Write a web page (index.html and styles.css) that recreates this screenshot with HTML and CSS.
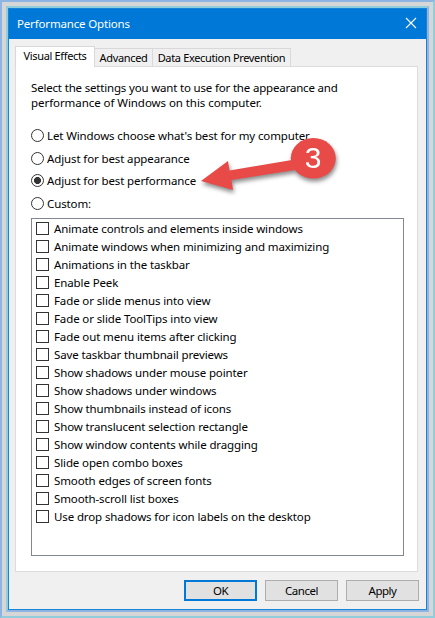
FILE: index.html
```
<!doctype html>
<html>
<head>
    <meta charset="utf-8">
    <title>Performance Options</title>
    <link rel="stylesheet" href="styles.css">
</head>
<body>

<div class="frame">
<div class="frame-inner">
<div class="window">
    <div class="titlebar">
        <span class="title">Performance Options</span>
        <svg class="close" width="12" height="12" viewBox="0 0 12 12">
            <path d="M1 1L11 11M11 1L1 11" stroke="#fff" stroke-width="1.1" fill="none"/>
        </svg>
    </div>

    <div class="tabs">
        <div class="tab active">Visual Effects</div>
        <div class="tab tab-adv">Advanced</div>
        <div class="tab tab-dep">Data Execution Prevention</div>
    </div>

    <div class="panel">
        <div class="intro">
            <div class="intro-a">Select the settings you want to use for the appearance and</div>
            <div class="intro-b">performance of Windows on this computer.</div>
        </div>

        <div class="radios">
            <div class="radio"><i></i><span>Let Windows choose what's best for my computer</span></div>
            <div class="radio"><i></i><span>Adjust for best appearance</span></div>
            <div class="radio checked"><i></i><span>Adjust for best performance</span></div>
            <div class="radio"><i></i><span>Custom:</span></div>
        </div>

        <div class="list">
            <div class="item"><i></i><span>Animate controls and elements inside windows</span></div>
            <div class="item"><i></i><span>Animate windows when minimizing and maximizing</span></div>
            <div class="item"><i></i><span>Animations in the taskbar</span></div>
            <div class="item"><i></i><span>Enable Peek</span></div>
            <div class="item"><i></i><span>Fade or slide menus into view</span></div>
            <div class="item"><i></i><span>Fade or slide ToolTips into view</span></div>
            <div class="item"><i></i><span>Fade out menu items after clicking</span></div>
            <div class="item"><i></i><span>Save taskbar thumbnail previews</span></div>
            <div class="item"><i></i><span>Show shadows under mouse pointer</span></div>
            <div class="item"><i></i><span>Show shadows under windows</span></div>
            <div class="item"><i></i><span>Show thumbnails instead of icons</span></div>
            <div class="item"><i></i><span>Show translucent selection rectangle</span></div>
            <div class="item"><i></i><span>Show window contents while dragging</span></div>
            <div class="item"><i></i><span>Slide open combo boxes</span></div>
            <div class="item"><i></i><span>Smooth edges of screen fonts</span></div>
            <div class="item"><i></i><span>Smooth-scroll list boxes</span></div>
            <div class="item"><i></i><span>Use drop shadows for icon labels on the desktop</span></div>
        </div>
    </div>

    <div class="buttons">
        <div class="btn default">OK</div>
        <div class="btn">Cancel</div>
        <div class="btn">Apply</div>
    </div>
</div>
</div>
</div>

<svg class="callout" width="160" height="80" viewBox="190 125 160 80">
    <path d="M201 181L228 161L229.500 170.500L292 160L295 170L231.500 180L233 190Z" fill="#e84b47"/>
    <ellipse cx="313.300" cy="158.300" rx="22.500" ry="20.300" fill="#e84b47"/>
    <text x="313" y="167.500" text-anchor="middle" class="num">3</text>
</svg>

</body>
</html>
```

FILE: styles.css
```
* {
    box-sizing: border-box;
}

body {
    margin: 0;
    font: 11.5px/15px "Noto Sans", "Open Sans", sans-serif;
    letter-spacing: -.12px;
    color: #000;
}

.frame {
    width: 435px;
    height: 618px;
    padding: 4px;
    background: #d6d6d6;
    border: 2px solid;
    border-color: #8eb4e3 #92cddc #92cddc #8eb4e3;
}

.frame-inner {
    height: 606px;
    border: 2px solid;
    border-color: #92cddc #8eb4e3 #8eb4e3 #92cddc;
}

.window {
    height: 602px;
    border: 1px solid #1883d7;
    background: #f0f0f0;
}

.titlebar {
    display: flex;
    justify-content: space-between;
    height: 30px;
    padding: 7px 9px 0 8px;
    background: #0078d7;
    color: #fff;
}

.title {
    letter-spacing: -.16px;
}

.close {
    margin-top: 1px;
}

.tabs {
    display: flex;
    align-items: flex-end;
    height: 27px;
    padding-left: 6px;
    white-space: nowrap;
}

.tab {
    height: 18px;
    padding-top: 1px;
    border: 1px solid #d9d9d9;
    border-left: none;
    border-bottom: none;
    background: #f0f0f0;
    text-align: center;
    font-size: 11px;
    letter-spacing: -.34px;
}

.tab.active {
    position: relative;
    width: 80px;
    height: 21px;
    margin-bottom: -1px;
    border-left: 1px solid #d9d9d9;
    background: #fff;
}

.tab-adv {
    width: 58px;
}

.tab-dep {
    width: 138px;
}

.panel {
    width: 403px;
    height: 506px;
    margin-left: 6px;
    padding: 13px 13px 0 15px;
    border: 1px solid #dcdcdc;
    background: #fff;
    white-space: nowrap;
}

.intro-a {
    letter-spacing: -.18px;
}

.intro-b {
    letter-spacing: -.06px;
}

.radios {
    padding-top: 14px;
}

.radio {
    display: flex;
    align-items: center;
    height: 22.700px;
}

.radio i {
    width: 13px;
    height: 13px;
    margin-right: 3px;
    border: 1px solid #333;
    border-radius: 50%;
}

.radio.checked i {
    background: radial-gradient(circle, #333 3.200px, #fff 3.800px);
}

.list {
    height: 338px;
    margin-top: 3px;
    padding: 1px 0 0 4px;
    border: 1px solid #828790;
}

.item {
    display: flex;
    align-items: center;
    height: 18px;
}

.item i {
    width: 13px;
    height: 13px;
    margin: 0 5px 1px 0;
    border: 1px solid #333;
}

.item span {
    padding-bottom: 1px;
}

.buttons {
    display: flex;
    justify-content: flex-end;
    gap: 8px;
    padding: 8px 7px 0 0;
}

.btn {
    width: 73px;
    height: 21px;
    border: 1px solid #adadad;
    background: #e1e1e1;
    font-size: 11.500px;
    line-height: 19px;
    letter-spacing: -.5px;
    text-align: center;
}

.btn.default {
    border: 2px solid #0078d7;
    line-height: 17px;
}

.callout {
    position: absolute;
    left: 190px;
    top: 125px;
    filter: drop-shadow(1px 3px 2px rgba(0, 0, 0, .45));
}

.num {
    font: 30px "Liberation Sans", Arial, sans-serif;
    fill: #fff;
}
```
